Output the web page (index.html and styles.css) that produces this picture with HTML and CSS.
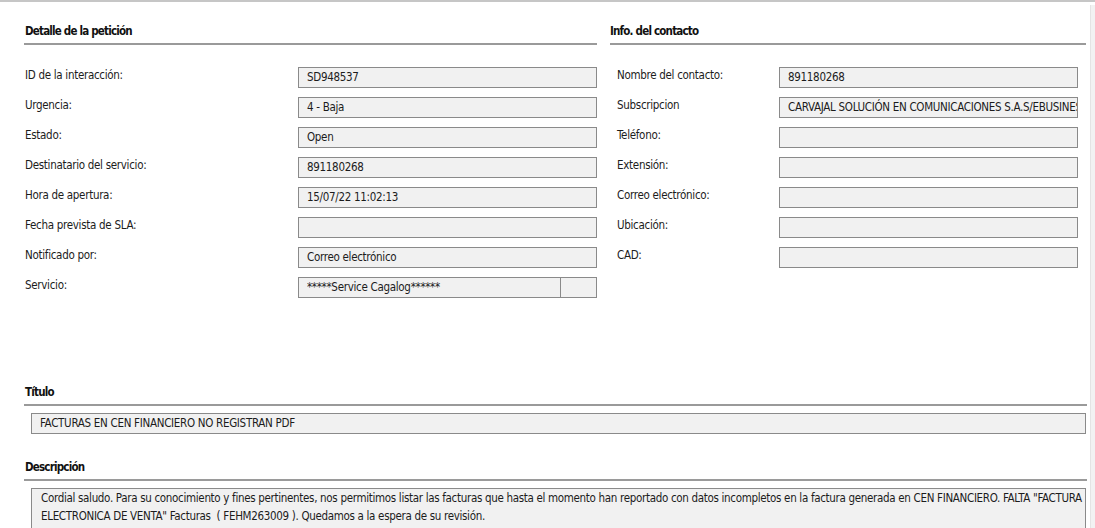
FILE: index.html
```html
<!DOCTYPE html>
<html lang="es">
<head>
<meta charset="utf-8">
<title>Detalle de la petición</title>
<link rel="stylesheet" href="styles.css">
</head>
<body>
<div class="page">
  <main class="main">
    <div class="cols">
      <section class="col col-left">
        <h2 class="heading">Detalle de la petición</h2>
        <div class="form">
          <div class="label">ID de la interacción:</div><div class="field">SD948537</div>
          <div class="label">Urgencia:</div><div class="field">4 - Baja</div>
          <div class="label">Estado:</div><div class="field">Open</div>
          <div class="label">Destinatario del servicio:</div><div class="field">891180268</div>
          <div class="label">Hora de apertura:</div><div class="field">15/07/22 11:02:13</div>
          <div class="label">Fecha prevista de SLA:</div><div class="field"></div>
          <div class="label">Notificado por:</div><div class="field">Correo electrónico</div>
          <div class="label">Servicio:</div><div class="field field-split"><span class="split-text">*****Service Cagalog******</span><span class="split-btn"></span></div>
        </div>
      </section>
      <section class="col col-right">
        <h2 class="heading heading-right">Info. del contacto</h2>
        <div class="form form-right">
          <div class="label">Nombre del contacto:</div><div class="field">891180268</div>
          <div class="label">Subscripcion</div><div class="field">CARVAJAL SOLUCIÓN EN COMUNICACIONES S.A.S/EBUSINESS</div>
          <div class="label">Teléfono:</div><div class="field"></div>
          <div class="label">Extensión:</div><div class="field"></div>
          <div class="label">Correo electrónico:</div><div class="field"></div>
          <div class="label">Ubicación:</div><div class="field"></div>
          <div class="label">CAD:</div><div class="field"></div>
        </div>
      </section>
    </div>
    <section class="wide wide-title">
      <h2 class="heading">Título</h2>
      <div class="field field-wide">FACTURAS EN CEN FINANCIERO NO REGISTRAN PDF</div>
    </section>
    <section class="wide wide-desc">
      <h2 class="heading">Descripción</h2>
      <div class="textarea">Cordial saludo. Para su conocimiento y fines pertinentes, nos permitimos listar las facturas que hasta el momento han reportado con datos incompletos en la factura generada en CEN FINANCIERO. FALTA "FACTURA ELECTRONICA DE VENTA" Facturas&nbsp; ( FEHM263009 ). Quedamos a la espera de su revisión.</div>
    </section>
  </main>
  <div class="scrolltrack"></div>
</div>
</body>
</html>
```
FILE: styles.css
```css
html, body {
  margin: 0;
  padding: 0;
  background: #ffffff;
}
body {
  font-family: "DejaVu Sans Condensed", "Liberation Sans", sans-serif;
  font-size: 11.5px;
  letter-spacing: -0.3px;
  color: #1c1c1c;
  overflow: hidden;
}
.page {
  display: flex;
  border-top: 2px solid #c6c6c6;
  height: 526px;
  overflow: hidden;
}
.main {
  flex: 1;
  padding-left: 24px;
  padding-right: 4px;
  min-width: 0;
}
.scrolltrack {
  width: 4px;
  margin-top: 3px;
  background: #f2f2f2;
  border-left: 1px solid #e4e4e4;
}
.cols {
  display: grid;
  grid-template-columns: 573px 476px;
  column-gap: 13px;
}
.heading {
  margin: 0;
  padding: 21px 0 4px 1px;
  font-size: 11.5px;
  letter-spacing: -0.8px;
  line-height: 16px;
  font-weight: bold;
  color: #111111;
  border-bottom: 2px solid #9a9a9a;
}
.heading-right {
  padding-left: 0;
}
.form {
  display: grid;
  grid-template-columns: 273px 299px;
  row-gap: 9px;
  margin-top: 22px;
  padding-left: 1px;
}
.form-right {
  grid-template-columns: 162px 299px;
  padding-left: 7px;
}
.label {
  line-height: 14px;
  margin-top: 1px;
  white-space: nowrap;
}
.field {
  box-sizing: border-box;
  height: 21px;
  line-height: 19px;
  border: 1px solid #8a8a8a;
  background: #f1f1f1;
  padding: 0 8px;
  white-space: nowrap;
  overflow: hidden;
}
.field-split {
  display: flex;
  padding: 0 0 0 8px;
}
.split-text {
  flex: 1;
  overflow: hidden;
}
.split-btn {
  width: 35px;
  border-left: 1px solid #8a8a8a;
}
.wide-title {
  margin-top: 65px;
}
.wide-desc {
  margin-top: 4px;
}
.field-wide {
  margin: 7px 0 0 7px;
  width: 1055px;
}
.textarea {
  box-sizing: border-box;
  margin: 7px 0 0 7px;
  width: 1055px;
  height: 60px;
  border: 1px solid #8a8a8a;
  background: #f1f1f1;
  padding: 0 1px 0 9px;
  line-height: 18px;
  letter-spacing: -0.32px;
}
.wide .heading {
  width: 1062px;
}
```
